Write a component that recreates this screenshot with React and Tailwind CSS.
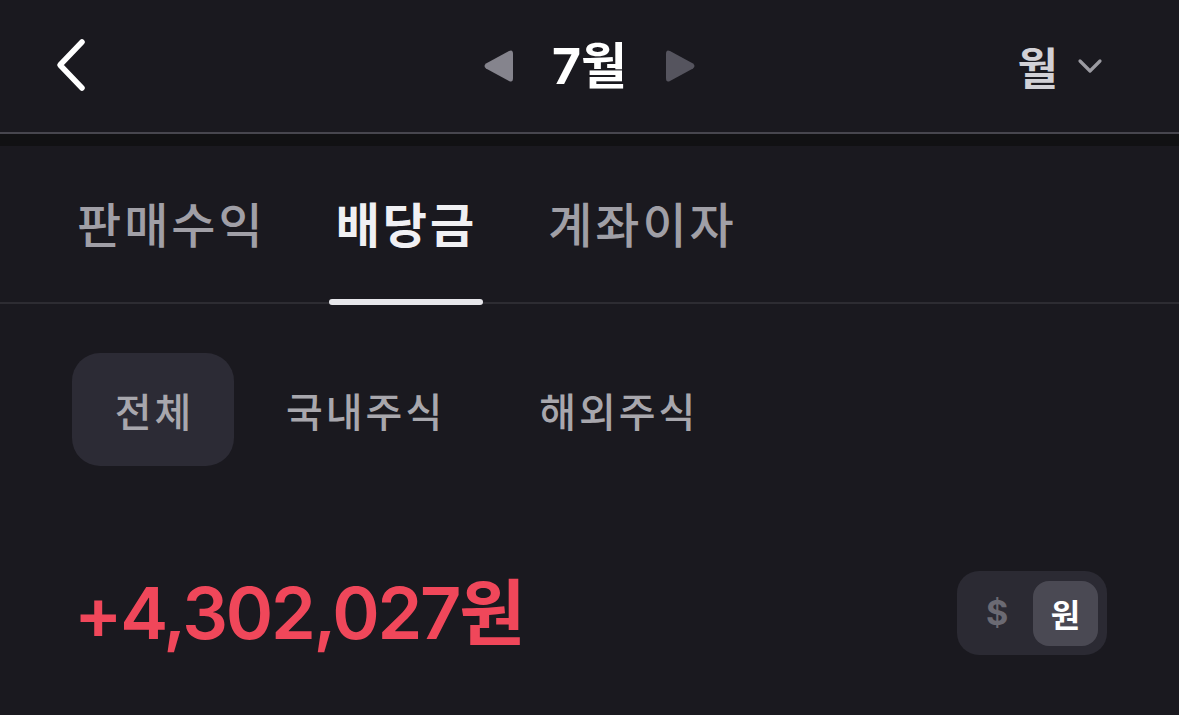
import React from "react";

const KR = { fontFamily: '"Noto Sans CJK KR", "Noto Sans", sans-serif' };
const NUM = { fontFamily: 'Inter, "Noto Sans CJK KR", sans-serif' };

export default function App() {
  return (
    <div className="w-[1179px] h-[715px] bg-[#1a191f] overflow-hidden" style={KR}>
      {/* Header */}
      <div className="relative h-[132px] flex items-center px-[55px]">
        <svg width="34" height="56" viewBox="0 0 34 56" className="mt-[-2px]">
          <path d="M27 5 L5 28 L27 51" fill="none" stroke="#ffffff" strokeWidth="5.5" strokeLinecap="round" strokeLinejoin="round" />
        </svg>
        <div className="absolute left-0 right-0 top-0 h-full flex items-center justify-center pointer-events-none">
          <div className="flex items-center gap-[38px]">
            <svg width="32" height="36" viewBox="0 0 32 36">
              <path d="M27 3 Q31 1 31 6 L31 30 Q31 35 27 33 L4 20.5 Q1 18 4 15.5 Z" fill="#85848d" />
            </svg>
            <span className="text-white text-[50px] font-bold leading-none" style={NUM}>7월</span>
            <svg width="32" height="36" viewBox="0 0 32 36">
              <path d="M5 3 Q1 1 1 6 L1 30 Q1 35 5 33 L28 20.5 Q31 18 28 15.5 Z" fill="#55545e" />
            </svg>
          </div>
        </div>
        <div className="ml-auto flex items-center gap-[19px] mr-[21px]">
          <span className="text-[#d2d1d6] text-[44px] font-semibold leading-none">월</span>
          <svg width="26" height="16" viewBox="0 0 26 16">
            <path d="M3 3 L13 13 L23 3" fill="none" stroke="#9b9aa1" strokeWidth="3.2" strokeLinecap="round" strokeLinejoin="round" />
          </svg>
        </div>
      </div>
      <div className="h-[2px] bg-[#47464e]" />
      <div className="h-[12px] bg-[#111113]" />

      {/* Tabs */}
      <div className="relative h-[158px] border-b-2 border-[#2d2c32]">
        <div className="flex items-center h-full pl-[77px] pb-[4px]">
          <span className="text-[#a09fa6] text-[48px] font-medium leading-none tracking-[3px]">판매수익</span>
          <span className="relative ml-[70px] text-[#f0f0f3] text-[48px] font-bold leading-none tracking-[3px]">
            배당금
            <span className="absolute left-[-7px] right-[-6px] top-[101px] h-[6px] rounded-full bg-[#e6e6ea]" />
          </span>
          <span className="ml-[71px] text-[#a09fa6] text-[48px] font-medium leading-none tracking-[3px]">계좌이자</span>
        </div>
      </div>

      {/* Sub tabs */}
      <div className="flex items-center pl-[72px] pt-[49px]">
        <div className="w-[162px] h-[113px] rounded-[28px] bg-[#2c2b35] flex items-center justify-center">
          <span className="text-[#a8a7ad] text-[40px] font-medium leading-none tracking-[3px] ml-[3px]">전체</span>
        </div>
        <span className="ml-[52px] text-[#a8a7ad] text-[40px] font-medium leading-none tracking-[3px]">국내주식</span>
        <span className="ml-[94px] text-[#a8a7ad] text-[40px] font-medium leading-none tracking-[3px]">해외주식</span>
      </div>

      {/* Amount */}
      <div className="flex items-center justify-between pl-[74px] pr-[72px] pt-[105px]">
        <span className="text-[#f0475a] text-[72px] font-semibold leading-none tracking-[-2.3px]" style={NUM}>+4,302,027원</span>
        <div className="w-[150px] h-[84px] rounded-[22px] bg-[#2b2a33] flex items-center pl-[29px] pr-[9px]">
          <span className="text-[#6b6a73] text-[34px] font-bold leading-none" style={NUM}>$</span>
          <div className="ml-auto w-[65px] h-[65px] rounded-[16px] bg-[#4a4953] flex items-center justify-center">
            <span className="text-white text-[32px] font-bold leading-none">원</span>
          </div>
        </div>
      </div>
    </div>
  );
}
